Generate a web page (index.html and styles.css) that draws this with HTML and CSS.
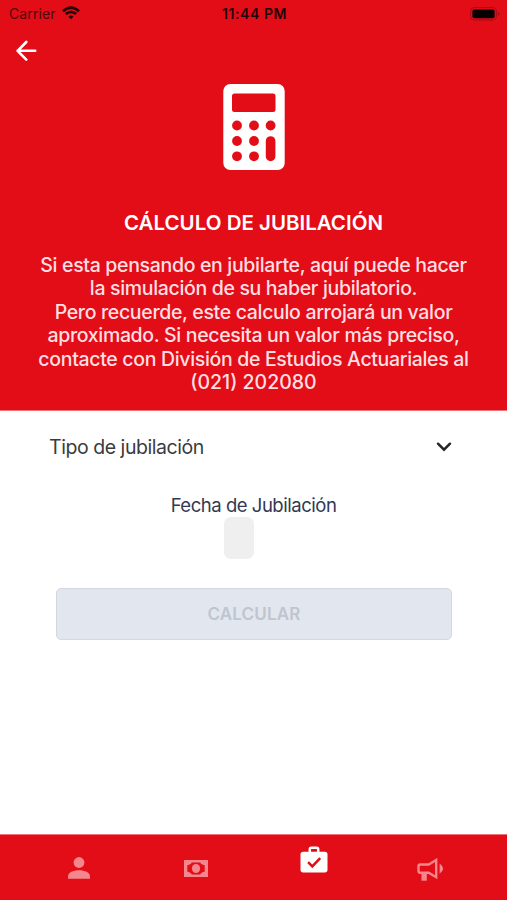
FILE: index.html
```html
<!DOCTYPE html>
<html lang="es">
<head>
<meta charset="utf-8">
<meta name="viewport" content="width=device-width, initial-scale=1">
<title>Cálculo de jubilación</title>
<link rel="stylesheet" href="styles.css">
</head>
<body>
<div class="app">
  <header class="hero">
    <div class="status">
      <div class="carrier"><span>Carrier</span>
        <svg width="18" height="14" viewBox="0 0 18 14" fill="none" stroke="#250407" stroke-width="2.6"><path d="M1 5.2Q9-2 17 5.2M3.8 8.1q5.2-4.5 10.4 0"/><path d="M6.4 10.5q2.6-2.2 5.2 0L9 13.2z" fill="#250407" stroke="none"/></svg>
      </div>
      <span class="time">11:44 PM</span>
      <svg class="battery" width="30" height="14" viewBox="0 0 30 14"><rect x=".6" y=".6" width="25.8" height="12.4" rx="3.5" fill="none" stroke="#a50b13"/><rect x="2.4" y="2.4" width="22.2" height="8.8" rx="2" fill="#060001"/><path d="M28 5v4q1.5-.6 1.5-2T28 5z" fill="#a50b13"/></svg>
    </div>
    <svg class="back" width="22" height="22" viewBox="0 0 22 22" fill="none" stroke="#fff" stroke-width="2.6" stroke-linecap="round" stroke-linejoin="round"><path d="M11.3 2 2.6 10.800l8.700 8.800M2.600 10.800h17.600"/></svg>
    <svg class="calculator" width="62" height="86" viewBox="0 0 62 86" fill="#e30d18"><rect x=".3" width="61.400" height="86" rx="7" fill="#fff"/><rect x="9" y="9.5" width="43.5" height="18.5" rx="2.5"/><circle cx="14" cy="41.5" r="4.9"/><circle cx="31" cy="41.5" r="4.9"/><circle cx="47.6" cy="41.5" r="4.9"/><circle cx="14" cy="57" r="4.9"/><circle cx="31" cy="57" r="4.9"/><circle cx="14" cy="72.3" r="4.9"/><circle cx="31" cy="72.3" r="4.9"/><rect x="42.8" y="52.2" width="9.6" height="25" rx="4.8"/></svg>
    <h1>CÁLCULO DE JUBILACIÓN</h1>
    <p class="intro">Si esta pensando en jubilarte, aquí puede hacer<br>la simulación de su haber jubilatorio.<br>Pero recuerde, este calculo arrojará un valor<br>aproximado. Si necesita un valor más preciso,<br>contacte con División de Estudios Actuariales al<br><span class="phone">(021) 202080</span></p>
  </header>
  <main class="form">
    <div class="select"><span>Tipo de jubilación</span>
      <svg width="16" height="10" viewBox="0 0 16 10" fill="none" stroke="#222426" stroke-width="2.4" stroke-linecap="round"><path d="m2 1.700 6 6 6-6"/></svg>
    </div>
    <label class="date-label">Fecha de Jubilación</label>
    <div class="date"></div>
    <button class="submit" disabled>CALCULAR</button>
  </main>
  <nav class="tabs">
    <svg class="tab person" width="22" height="22" viewBox="0 0 22 22" fill="#f4868c"><circle cx="11" cy="5.5" r="5.4"/><path d="M0 21.7v-2.3c0-3.9 5.2-6.1 11-6.1s11 2.2 11 6.1v2.3z"/></svg>
    <svg class="tab cash" width="24" height="17" viewBox="0 0 24 17"><path fill="#f4868c" fill-rule="evenodd" d="M0 0h24v17H0zM7.7 2.6C7.4 4 5.500 5 3.300 5.300v6.400c2.200.3 4.100 1.300 4.400 2.700h8.600c.3-1.400 2.200-2.400 4.400-2.700V5.300C18.500 5 16.600 4 16.300 2.600z"/><ellipse cx="12" cy="8.500" rx="4.100" ry="4.500" fill="#f4868c"/></svg>
    <svg class="tab briefcase" width="28" height="27" viewBox="0 0 28 27"><path d="M9.800 7V3.200q0-1.400 1.400-1.400h5.600q1.400 0 1.400 1.400V7" fill="none" stroke="#fff" stroke-width="2.500"/><rect x=".5" y="5.800" width="27" height="20.700" rx="2.700" fill="#fff"/><path d="m8.100 16.200 4.200 4.200 7.900-8.300" fill="none" stroke="#e30d18" stroke-width="2.500"/></svg>
    <svg class="tab horn" width="27" height="24" viewBox="0 0 27 24" fill="none" stroke="#f4868c" stroke-width="2.400"><path d="M3.300 6.500h8.400L19.200 2v17.200l-7.500-4.500H3.300q-1.800 0-1.800-1.800V8.300q0-1.800 1.800-1.800z"/><path d="M4.500 15h5.300v7.700H4.500z" fill="#f4868c" stroke="none"/><path d="M22.600 5.600q7 5 0 10.200z" fill="#f4868c" stroke="none"/></svg>
  </nav>
</div>
</body>
</html>
```
FILE: styles.css
```css
* { box-sizing: border-box; }
body { margin: 0; font-family: Inter, "Liberation Sans", sans-serif; background: #fff; }
svg { display: block; flex: none; }
.app { width: 507px; height: 900px; display: flex; flex-direction: column; overflow: hidden; }
.hero { height: 411px; flex: none; background: #e30d18; color: #fff; display: flex; flex-direction: column; border-bottom: 1px solid #ee7379; }
.status { height: 28px; flex: none; display: grid; grid-template-columns: 1fr auto 1fr; align-items: center; padding: 0 7px 0 9px; color: #250407; font-size: 14px; line-height: 28px; }
.carrier { display: flex; align-items: center; gap: 6px; color: #4d080c; letter-spacing: .1px; }
.carrier svg { margin-top: -2px; }
.time { font-weight: 600; letter-spacing: .6px; }
.battery { justify-self: end; }
.back { margin: 12px 0 0 15px; }
.calculator { margin: 22px 0 0 223px; }
h1 { margin: 38px 0 0; font-size: 20.500px; line-height: 30px; font-weight: 600; text-align: center; }
.intro { margin: 16px 0 0; font-size: 19.500px; line-height: 23.400px; font-weight: 500; letter-spacing: -.33px; text-align: center; white-space: nowrap; color: #ffdfe1; }
.phone { letter-spacing: 0; }
.form { flex: 1; display: flex; flex-direction: column; }
.select { display: flex; align-items: center; justify-content: space-between; margin: 21px 55px 0 49px; height: 30px; font-size: 19.500px; letter-spacing: -.45px; color: #3b3b3c; }
.date-label { margin-top: 31px; height: 24px; line-height: 24px; text-align: center; font-size: 18.500px; letter-spacing: -.47px; color: #333853; }
.date { width: 30px; height: 42px; margin: 0 0 0 224px; border-radius: 7px; background: #efefef; }
.submit { margin: 29px 55px 0 56px; height: 52px; border: 1px solid #d5d8de; border-radius: 5px; background: #e2e6ee; color: #bfc5d0; font: 600 17px Inter, "Liberation Sans", sans-serif; letter-spacing: .15px; }
.tabs { height: 66px; flex: none; background: #e30d18; border-top: 1px solid #ee7379; display: flex; align-items: flex-start; padding-left: 68px; }
.person { margin-top: 22px; }
.cash { margin: 25px 0 0 94px; }
.briefcase { margin: 11px 0 0 92px; }
.horn { margin: 23px 0 0 89px; }
```
